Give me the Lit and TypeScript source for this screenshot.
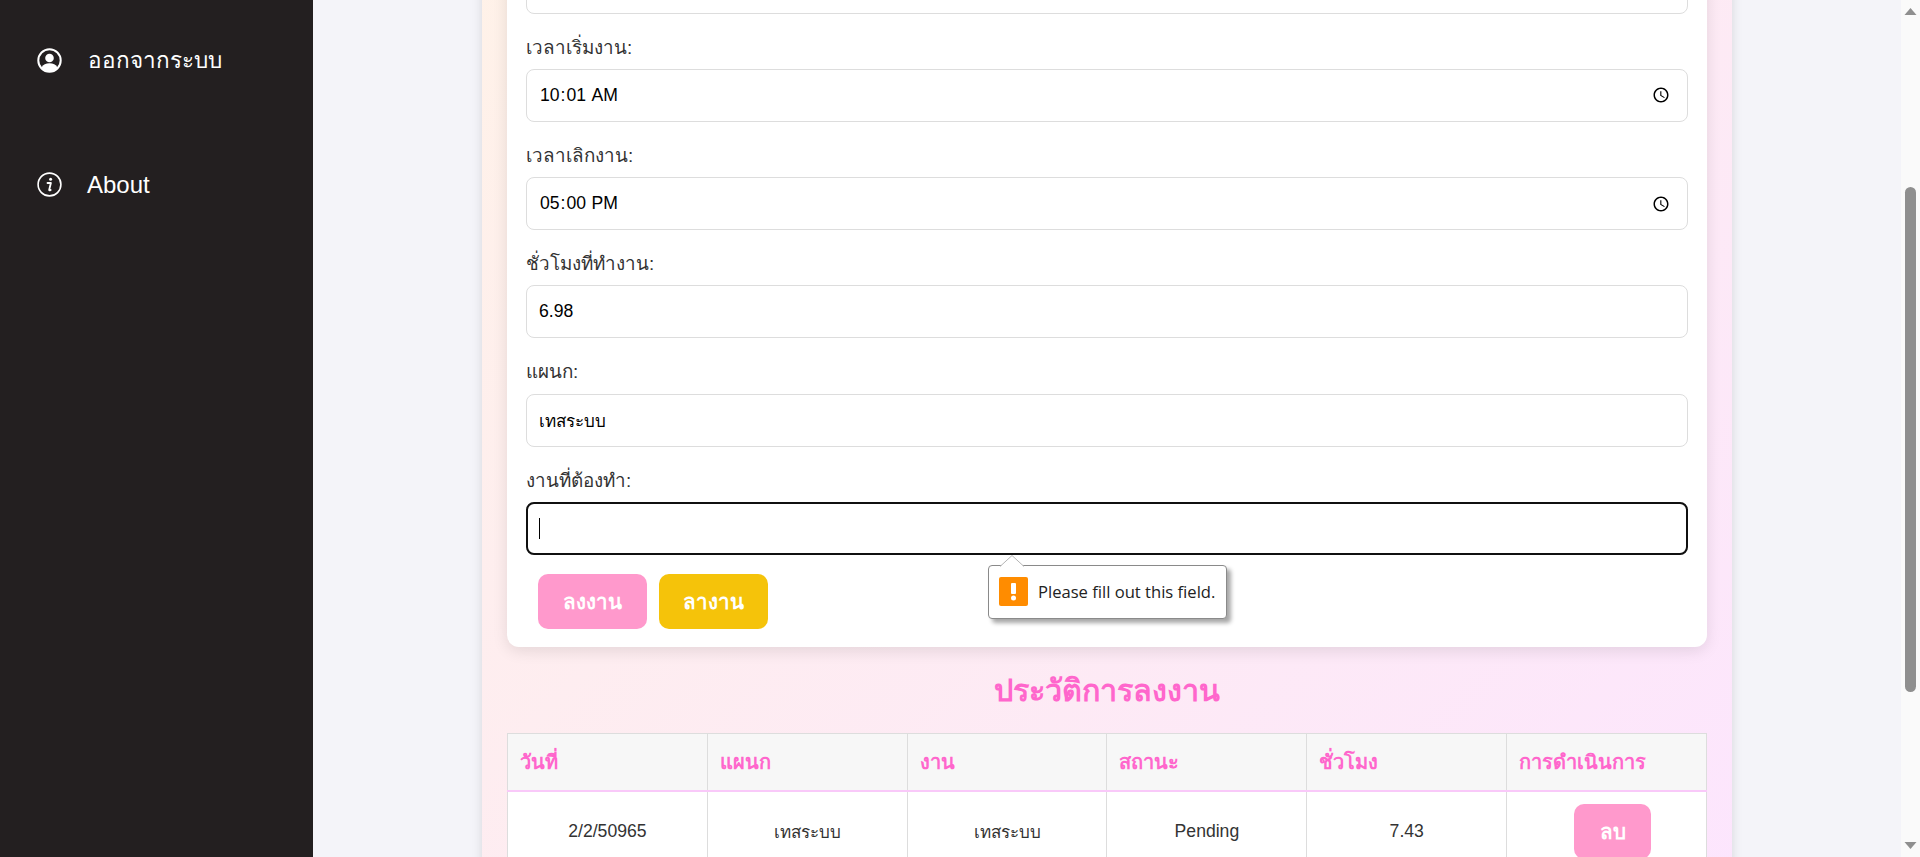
import { LitElement, html, css } from 'lit';
import { customElement } from 'lit/decorators.js';

/** One history row shown in the table */
const HISTORY = [
  { date: '2/2/50965', dept: 'เทสระบบ', task: 'เทสระบบ', status: 'Pending', hours: '7.43' },
];

const HEADERS = ['วันที่', 'แผนก', 'งาน', 'สถานะ', 'ชั่วโมง', 'การดำเนินการ'];

@customElement('app-root')
export class AppRoot extends LitElement {
  static styles = css`
    :host {
      display: flex;
      height: 100vh;
      overflow: hidden;
      background: #f4f4f9;
      font-family: 'Liberation Sans', Arial, 'Noto Sans', sans-serif;
      color: #333;
    }

    /* sidebar */
    .sidebar {
      flex: 0 0 313px;
      background: #231f20;
      color: #fff;
      display: flex;
      flex-direction: column;
      gap: 87px;
      padding: 42px 0 0 37px;
      box-sizing: border-box;
    }
    .nav-item {
      display: flex;
      align-items: center;
      gap: 25px;
      height: 37px;
      font-size: 24px;
      line-height: 37px;
    }
    .nav-item svg {
      flex: 0 0 25px;
    }
    .nav-item.thai {
      gap: 26px;
      font-size: 22.500px;
    }

    /* page column, shifted up by the scroll offset */
    .main {
      flex: 1;
      min-width: 0;
      overflow: hidden;
      display: flex;
      justify-content: center;
    }
    .container {
      flex: 0 0 1250px;
      box-sizing: border-box;
      height: 1350px;
      margin-top: -265px;
      padding: 227px 25px 25px;
      background: linear-gradient(135deg, #fff3e6, #fce4ff);
      box-shadow: 0 0 10px rgba(0, 0, 0, 0.12);
    }

    /* form card */
    .card {
      background: #fff;
      border-radius: 12px;
      box-shadow: 0 4px 15px rgba(0, 0, 0, 0.1);
      padding: 0 19px 18.200px;
    }
    .field {
      display: flex;
      flex-direction: column;
    }
    label {
      font-size: 18.800px;
      line-height: 21px;
      margin: 23px 0 11.150px;
    }
    input {
      box-sizing: border-box;
      width: 100%;
      height: 53px;
      padding: 15px 14px 15px 12px;
      border: 1px solid #ddd;
      border-radius: 8px;
      background: #fff;
      color: #000;
      font-family: inherit;
      font-size: 17.6px;
    }
    input.thai {
      font-size: 17px;
    }
    .stub {
      height: 52px;
      border-radius: 0 0 8px 8px;
    }
    .task-wrap {
      position: relative;
    }
    input.focused {
      outline: 2px solid #101010;
      outline-offset: -2px;
    }
    .caret {
      position: absolute;
      left: 13px;
      top: 16px;
      width: 1px;
      height: 21px;
      background: #000;
    }

    .actions {
      display: flex;
      gap: 12px;
      padding: 19.250px 0 0 12px;
    }
    .btn {
      width: 109px;
      height: 55px;
      border: 0;
      border-radius: 10px;
      color: #fff;
      font-family: inherit;
      font-size: 20.500px;
      font-weight: 700;
    }
    .btn.pink {
      background: #ff99cc;
    }
    .btn.yellow {
      background: #f5c30a;
    }

    /* validation bubble */
    .bubble {
      position: absolute;
      left: 462px;
      top: 63px;
      z-index: 2;
      display: flex;
      align-items: center;
      gap: 10px;
      box-sizing: border-box;
      width: 239px;
      height: 54px;
      padding: 0 0 0 10px;
      background: #fff;
      border: 1px solid #8a8a8a;
      border-radius: 4px;
      box-shadow: 4px 4px 4px rgba(0, 0, 0, 0.35);
      font-family: 'Open Sans', sans-serif;
      font-size: 16.600px;
      color: #222;
      white-space: nowrap;
    }
    .bubble .arrow {
      position: absolute;
      left: 11px;
      top: -11px;
    }
    .warn {
      flex: 0 0 29px;
      height: 29px;
      border-radius: 2px;
      background: #ff8c00;
      display: flex;
      align-items: center;
      justify-content: center;
    }

    /* history */
    h2 {
      margin: 0;
      padding: 24px 0 23px;
      text-align: center;
      font-size: 30.500px;
      line-height: 39px;
      color: #ff66cc;
    }
    table {
      width: 1200px;
      table-layout: fixed;
      border-collapse: collapse;
      background: #fff;
    }
    th,
    td {
      border: 1px solid #ddd;
      padding: 12px;
    }
    th {
      background: #f7f7f7;
      border-bottom: 2px solid #f9c9f9;
      color: #ff66cc;
      font-size: 20px;
      line-height: 32px;
      text-align: left;
    }
    td {
      font-size: 17.6px;
      text-align: center;
    }
    td.thai {
      font-size: 17px;
    }
    .del {
      width: 77px;
      margin-left: 12px;
    }
  `;

  private field(label: string, type: string, value: string, cls = '') {
    return html`
      <div class="field">
        <label>${label}</label>
        <input class=${cls} type=${type} .value=${value} />
      </div>
    `;
  }

  render() {
    return html`
      <nav class="sidebar">
        <div class="nav-item thai">
          <svg width="25" height="25" viewBox="0 0 25 25">
            <circle cx="12.500" cy="12.500" r="11.200" fill="none" stroke="#fff" stroke-width="2" />
            <circle cx="12.500" cy="10" r="4.300" fill="#fff" />
            <path d="M4.500 19.500c1.500-3 4.500-4.200 8-4.200s6.500 1.200 8 4.200c-2 2.800-5 4-8 4s-6-1.200-8-4z" fill="#fff" />
          </svg>
          ออกจากระบบ
        </div>
        <div class="nav-item">
          <svg width="25" height="25" viewBox="0 0 25 25">
            <circle cx="12.500" cy="12.500" r="11.400" fill="none" stroke="#fff" stroke-width="1.600" />
            <circle cx="13.600" cy="7.300" r="1.500" fill="#fff" />
            <path d="M10.500 11h3.400l-1.700 6.800c-.1.600.3.800 1.500.1" fill="none" stroke="#fff" stroke-width="1.800" stroke-linecap="round" stroke-linejoin="round" />
          </svg>
          About
        </div>
      </nav>

      <main class="main">
        <div class="container">
          <section class="card">
            <div class="field"><input class="stub" type="text" /></div>
            ${this.field('เวลาเริ่มงาน:', 'time', '10:01')}
            ${this.field('เวลาเลิกงาน:', 'time', '17:00')}
            ${this.field('ชั่วโมงที่ทำงาน:', 'text', '6.98')}
            ${this.field('แผนก:', 'text', 'เทสระบบ', 'thai')}
            <div class="field">
              <label>งานที่ต้องทำ:</label>
              <div class="task-wrap">
                <input class="focused" type="text" />
                <span class="caret"></span>
                <div class="bubble">
                  <svg class="arrow" width="24" height="12" viewBox="0 0 24 12">
                    <path d="M0 11.500L12 .5l12 11" fill="#fff" stroke="#b5b5b5" />
                  </svg>
                  <span class="warn">
                    <svg width="7" height="19" viewBox="0 0 7 19">
                      <rect x="1" y="1" width="5" height="11" rx="1" fill="#fff" />
                      <circle cx="3.500" cy="16" r="2.500" fill="#fff" />
                    </svg>
                  </span>
                  Please fill out this field.
                </div>
              </div>
            </div>
            <div class="actions">
              <button class="btn pink">ลงงาน</button>
              <button class="btn yellow">ลางาน</button>
            </div>
          </section>

          <h2>ประวัติการลงงาน</h2>

          <table>
            <thead>
              <tr>${HEADERS.map((h) => html`<th>${h}</th>`)}</tr>
            </thead>
            <tbody>
              ${HISTORY.map(
                (row) => html`
                  <tr>
                    <td>${row.date}</td>
                    <td class="thai">${row.dept}</td>
                    <td class="thai">${row.task}</td>
                    <td>${row.status}</td>
                    <td>${row.hours}</td>
                    <td><button class="btn pink del">ลบ</button></td>
                  </tr>
                `
              )}
            </tbody>
          </table>
        </div>
      </main>

      <scroll-rail></scroll-rail>
    `;
  }
}

/** The page scrollbar as it appears in the screenshot */
@customElement('scroll-rail')
export class ScrollRail extends LitElement {
  static styles = css`
    :host {
      flex: 0 0 19px;
      display: flex;
      flex-direction: column;
      align-items: center;
      background: #fafafa;
    }
    svg {
      flex: 0 0 19px;
    }
    .track {
      flex: 1;
      width: 100%;
      display: flex;
      justify-content: center;
    }
    .thumb {
      width: 11px;
      height: 505px;
      margin-top: 168px;
      border-radius: 6px;
      background: #8f8f8f;
    }
  `;

  render() {
    return html`
      <svg width="19" height="19" viewBox="0 0 19 19"><path d="M3.500 15L9.500 8l6 7z" fill="#8f8f8f" /></svg>
      <div class="track"><div class="thumb"></div></div>
      <svg width="19" height="19" viewBox="0 0 19 19"><path d="M3.500 4l6 7 6-7z" fill="#8f8f8f" /></svg>
    `;
  }
}
